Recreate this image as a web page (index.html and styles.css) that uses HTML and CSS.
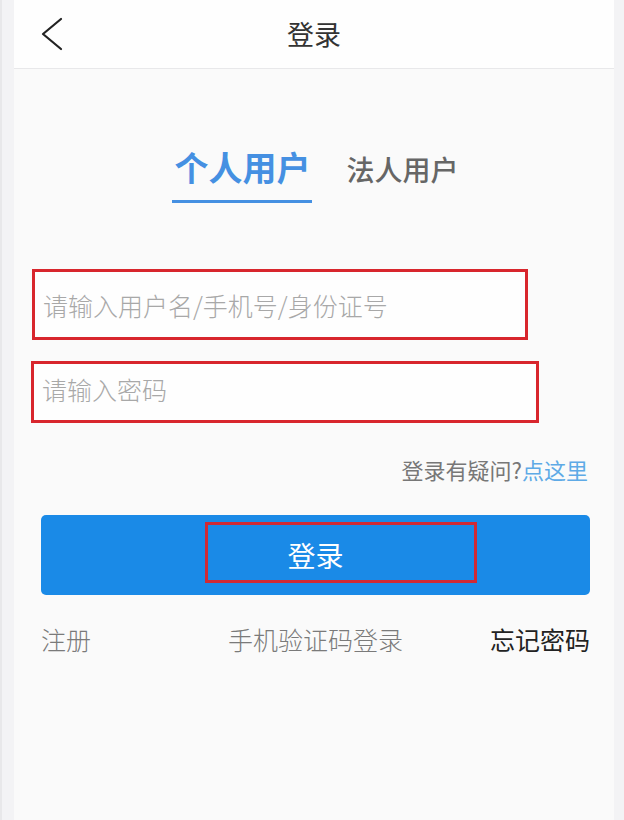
FILE: index.html
```html
<!DOCTYPE html>
<html lang="zh-CN">
<head>
    <meta charset="UTF-8">
    <meta name="viewport" content="width=device-width, initial-scale=1.0">
    <title>登录</title>
    <link rel="stylesheet" href="styles.css">
</head>
<body>
    <div class="phone">
        <div class="edge edge-left"></div>
        <main class="screen">
            <header class="topbar">
                <a class="back" href="#">
                    <svg width="24" height="34" viewBox="0 0 24 34">
                        <path d="M21 2 L3 17 L21 32" fill="none" stroke="#222" stroke-width="2.2" stroke-linecap="round" stroke-linejoin="round"/>
                    </svg>
                </a>
                <h1>登录</h1>
                <span></span>
            </header>

            <section class="content">
                <div class="tabs">
                    <span class="tab active">个人用户</span>
                    <span class="tab">法人用户</span>
                </div>

                <div class="field field-user">
                    <span class="placeholder">请输入用户名/手机号/身份证号</span>
                </div>
                <div class="field field-pass">
                    <span class="placeholder">请输入密码</span>
                </div>

                <div class="help">登录有疑问?<a href="#">点这里</a></div>

                <button class="login">
                    登录
                    <span class="mark"></span>
                </button>

                <div class="links">
                    <a href="#" class="muted">注册</a>
                    <a href="#" class="muted">手机验证码登录</a>
                    <a href="#" class="strong">忘记密码</a>
                </div>
            </section>
        </main>
        <div class="edge edge-right"></div>
    </div>
</body>
</html>
```

FILE: styles.css
```css
*{
    margin: 0;
    padding: 0;
    box-sizing: border-box;
    text-decoration: none;
    font-family: "Noto Sans CJK SC", "Noto Sans", sans-serif;
}

body{
    background-color: #fafafa;
}

.phone{
    display: flex;
    min-height: 820px;
}

.edge{
    background-color: #f3f3f5;
}

.edge-left{
    width: 14px;
    border-left: 2px solid #e8e8ea;
}

.edge-right{
    width: 10px;
}

.screen{
    flex: 1;
    background-color: #fafafa;
}

/* header */
.topbar{
    display: grid;
    grid-template-columns: 1fr auto 1fr;
    align-items: center;
    height: 69px;
    background-color: #fefefe;
    border-bottom: 1px solid #e8e8ea;
}

.back{
    display: flex;
    padding-left: 26px;
}

.topbar h1{
    font-size: 27px;
    font-weight: 400;
    color: #333;
    line-height: 1;
    padding-bottom: 2px;
}

/* body */
.content{
    padding: 0 24px 0 27px;
}

.tabs{
    display: flex;
    justify-content: center;
    align-items: baseline;
    gap: 34px;
    margin-top: 78px;
}

.tab{
    font-size: 28px;
    font-weight: 500;
    color: #666;
    line-height: 40px;
}

.tab.active{
    font-size: 34px;
    font-weight: 700;
    color: #4590e2;
    padding: 0 2px 13px;
    border-bottom: 3px solid #4590e2;
}

.field{
    display: flex;
    align-items: center;
    border: 3px solid #d8262d;
    background-color: #fefefe;
    padding-left: 8px;
}

.field-user{
    width: 496px;
    height: 71px;
    margin-top: 66px;
    margin-left: -9px;
}

.field-pass{
    width: 508px;
    height: 62px;
    margin-top: 21px;
    margin-left: -10px;
    padding-bottom: 6px;
}

.placeholder{
    font-size: 25px;
    font-weight: 300;
    color: #a8a8a8;
}

.help{
    text-align: right;
    font-size: 22px;
    color: #777;
    margin-top: 30px;
    padding-right: 2px;
}

.help a{
    color: #5eaae6;
}

.login{
    position: relative;
    display: block;
    width: 100%;
    height: 80px;
    margin-top: 30px;
    border: none;
    border-radius: 5px;
    background-color: #1a8ae7;
    color: #fff;
    font-size: 28px;
    font-weight: 400;
    cursor: pointer;
}

.login .mark{
    position: absolute;
    left: 164px;
    top: 7px;
    width: 272px;
    height: 61px;
    border: 3px solid #d02a34;
}

.links{
    display: grid;
    grid-template-columns: 1fr auto 1fr;
    align-items: center;
    margin-top: 26px;
    font-size: 25px;
}

.links .muted{
    color: #7a7a7a;
    font-weight: 300;
}

.links .strong{
    justify-self: end;
    color: #222;
    font-weight: 400;
}
```
